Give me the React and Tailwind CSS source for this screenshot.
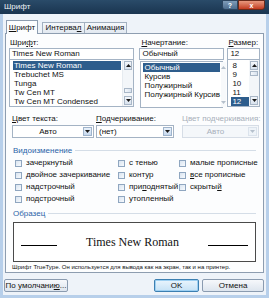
import React from 'react';

const Check = ({ children }) => (
  <div className="flex items-center h-[12px]">
    <span className="w-[7px] h-[7px] border border-[#8fa6c0] bg-gradient-to-br from-[#d9e4f0] to-[#f7fafd] shrink-0" />
    <span className="ml-[4px] whitespace-nowrap">{children}</span>
  </div>
);

const Arrow = ({ up, dim }) => (
  <svg width="5" height="3" viewBox="0 0 5 3">
    <path d={up ? 'M0 3 L2.5 0 L5 3 Z' : 'M0 0 L5 0 L2.5 3 Z'} fill={dim ? '#b5c0cc' : '#1a1a1a'} />
  </svg>
);

const ScrollBtn = ({ up }) => (
  <div className="h-[9px] flex items-center justify-center border border-[#a9b7c7] bg-gradient-to-b from-[#f4f7fb] to-[#d8e2ee]">
    <Arrow up={up} />
  </div>
);

const Drop = ({ w, children, disabled }) => (
  <div className={`h-[13px] flex items-center border ${disabled ? 'border-[#d6dde6] bg-[#f4f7fa] text-[#a8b0ba]' : 'border-[#a4b3c4] bg-white'}`} style={{ width: w }}>
    <span className="flex-1 text-center">{children}</span>
    <div className={`w-[9px] h-[9px] mr-[1px] flex items-center justify-center border ${disabled ? 'border-[#dbe3ec] bg-[#eef3f8]' : 'border-[#9fb4cc] bg-gradient-to-b from-[#eaf2fb] to-[#c7d9ee]'}`}>
      <Arrow dim={disabled} />
    </div>
  </div>
);

export default function App() {
  return (
    <div className="w-[269px] h-[298px] overflow-hidden bg-[#b7cfea] flex flex-col text-[8px] leading-none text-[#111] font-['Liberation_Sans',Arial,sans-serif]">
      {/* title bar */}
      <div className="h-[14px] flex items-start bg-gradient-to-b from-[#2a4b69] to-[#1a3550] shrink-0">
        <span className="ml-[4px] mt-[3px] text-[#f0f4f8]">Шрифт</span>
        <div className="ml-auto mr-[4px] flex">
          <div className="w-[16px] h-[10px] flex items-center justify-center bg-gradient-to-b from-[#7f9cb9] to-[#4d6d8e] border border-[#2c4560] rounded-bl-[3px] text-white text-[7px] font-bold">?</div>
          <div className="w-[27px] h-[10px] flex items-center justify-center bg-gradient-to-b from-[#e8987e] to-[#c2391d] border border-[#6a2a1a] rounded-br-[3px] text-white text-[7px] font-bold">x</div>
        </div>
      </div>

      {/* client area */}
      <div className="flex-1 mx-[3px] mb-[3px] bg-[#eef3f9] flex flex-col">
        {/* tabs */}
        <div className="flex items-end h-[19px] pl-[3px]">
          <div className="h-[14px] w-[32px] bg-[#fcfdfe] border border-b-0 border-[#8d9db0] flex items-center justify-center -mb-px relative z-10">
            <span><u>Ш</u>рифт</span>
          </div>
          <div className="h-[11px] w-[43px] ml-[4px] bg-gradient-to-b from-[#f5f8fb] to-[#e1e8f0] border border-b-0 border-[#a2b0c0] flex items-center justify-center">
            <span>Интерва<u>л</u></span>
          </div>
          <div className="h-[11px] w-[42px] bg-gradient-to-b from-[#f5f8fb] to-[#e1e8f0] border border-b-0 border-l-0 border-[#a2b0c0] flex items-center justify-center">
            <span>Анимация</span>
          </div>
        </div>

        {/* panel */}
        <div className="mx-[2px] h-[240px] border border-[#8d9db0] bg-[#fcfdfe] flex flex-col px-[3px]">
          {/* font / style / size */}
          <div className="flex mt-[5px]">
            <div className="w-[127px] flex flex-col">
              <span className="h-[9px] ml-[1px]">Шри<u>ф</u>т:</span>
              <div className="h-[12px] border border-[#a4b3c4] bg-white flex items-center pl-[2px]">Times New Roman</div>
              <div className="h-[47px] border border-t-0 border-[#a4b3c4] bg-white flex">
                <div className="flex-1 flex flex-col pt-[1px] pl-[3px] pr-[1px]">
                  <div className="h-[9px] bg-[#2e5d8c] text-white flex items-center pl-[1px]">Times New Roman</div>
                  <div className="h-[9px] flex items-center pl-[1px]">Trebuchet MS</div>
                  <div className="h-[9px] flex items-center pl-[1px]">Tunga</div>
                  <div className="h-[9px] flex items-center pl-[1px]">Tw Cen MT</div>
                  <div className="h-[9px] flex items-center pl-[1px]">Tw Cen MT Condensed</div>
                </div>
                <div className="w-[11px] flex flex-col bg-[#f3f6f9] border-l border-[#e6ebf0] py-[1px] px-[1px]">
                  <ScrollBtn up />
                  <div className="flex-1 flex flex-col justify-end pb-[3px]">
                    <div className="h-[5px] border border-[#a9b7c7] bg-gradient-to-r from-[#f4f7fb] to-[#d8e2ee]" />
                  </div>
                  <ScrollBtn />
                </div>
              </div>
            </div>

            <div className="w-[85px] ml-[5px] flex flex-col">
              <span className="h-[9px] ml-[2px]"><u>Н</u>ачертание:</span>
              <div className="h-[12px] border border-[#a4b3c4] bg-white flex items-center pl-[2px]">Обычный</div>
              <div className="h-[47px] ml-[1px] mr-[1px] border border-[#a4b3c4] bg-white flex mt-[1px]">
                <div className="flex-1 flex flex-col pt-[1px] pl-[2px] pr-[1px]">
                  <div className="h-[9px] bg-[#2e5d8c] text-white flex items-center pl-[1px]">Обычный</div>
                  <div className="h-[9px] flex items-center pl-[1px]">Курсив</div>
                  <div className="h-[9px] flex items-center pl-[1px]">Полужирный</div>
                  <div className="h-[9px] flex items-center pl-[1px] whitespace-nowrap">Полужирный Курсив</div>
                </div>
                <div className="w-[9px] flex flex-col bg-[#f7f9fb] py-[1px]">
                  <div className="h-[8px] flex items-center justify-center"><Arrow up dim /></div>
                  <div className="flex-1" />
                  <div className="h-[8px] flex items-center justify-center"><Arrow dim /></div>
                </div>
              </div>
            </div>

            <div className="w-[33px] ml-[3px] flex flex-col">
              <span className="h-[9px] ml-[1px]"><u>Р</u>азмер:</span>
              <div className="h-[12px] border border-[#a4b3c4] bg-white flex items-center pl-[2px]">12</div>
              <div className="h-[47px] border border-t-0 border-[#a4b3c4] bg-white flex">
                <div className="flex-1 flex flex-col pt-[1px] pl-[3px]">
                  <div className="h-[9px] flex items-center pl-[1px]">8</div>
                  <div className="h-[9px] flex items-center pl-[1px]">9</div>
                  <div className="h-[9px] flex items-center pl-[1px]">10</div>
                  <div className="h-[9px] flex items-center pl-[1px]">11</div>
                  <div className="h-[9px] bg-[#2e5d8c] text-white flex items-center pl-[1px]">12</div>
                </div>
                <div className="w-[10px] flex flex-col bg-[#f3f6f9] py-[1px] px-[1px]">
                  <ScrollBtn up />
                  <div className="flex-1 flex flex-col pt-[1px]">
                    <div className="h-[5px] border border-[#a9b7c7] bg-gradient-to-r from-[#f4f7fb] to-[#d8e2ee]" />
                  </div>
                  <ScrollBtn />
                </div>
              </div>
            </div>
          </div>

          {/* colour / underline */}
          <div className="flex mt-[7px] pl-[3px]">
            <div className="flex flex-col w-[82px]">
              <span className="h-[10px]"><u>Ц</u>вет текста:</span>
              <Drop w={82}>Авто</Drop>
            </div>
            <div className="flex flex-col w-[78px] ml-[2px]">
              <span className="h-[10px]"><u>П</u>одчеркивание:</span>
              <Drop w={78}>
                <span className="block text-left pl-[2px]">(нет)</span>
              </Drop>
            </div>
            <div className="flex flex-col w-[77px] ml-[8px]">
              <span className="h-[10px] text-[#a8b0ba] whitespace-nowrap">Цвет подчеркивания:</span>
              <Drop w={77} disabled>Авто</Drop>
            </div>
          </div>

          {/* effects */}
          <div className="flex items-center mt-[8px] pl-[4px] h-[9px]">
            <span className="text-[#2a62a8]">Видоизменение</span>
            <div className="flex-1 ml-[3px] mr-[4px] border-t border-[#d4dde7]" />
          </div>
          <div className="flex pl-[6px] mt-[2px]">
            <div className="w-[103px] flex flex-col">
              <Check>зачеркнутый</Check>
              <Check>двойное зачеркивание</Check>
              <Check>надстрочный</Check>
              <Check>подстрочный</Check>
            </div>
            <div className="w-[61px] flex flex-col">
              <Check>с тенью</Check>
              <Check>контур</Check>
              <Check>при<u>п</u>однятый</Check>
              <Check>утопленный</Check>
            </div>
            <div className="flex flex-col">
              <Check>малые прописные</Check>
              <Check><u>в</u>се прописные</Check>
              <Check>скрыты<u>й</u></Check>
            </div>
          </div>

          {/* sample */}
          <div className="flex items-center mt-[4px] pl-[4px] h-[9px]">
            <span className="text-[#2a62a8]">Образец</span>
            <div className="flex-1 ml-[3px] mr-[4px] border-t border-[#d4dde7]" />
          </div>
          <div className="mx-[4px] mt-[4px] h-[40px] border border-[#4a4a4a] bg-white flex items-center px-[7px]">
            <div className="w-[36px] border-t border-black mt-[6px]" />
            <span className="flex-1 text-center text-[12px] font-['Liberation_Serif','Times_New_Roman',serif]">Times New Roman</span>
            <div className="w-[40px] border-t border-black mt-[6px]" />
          </div>
          <div className="mt-[2px] pl-[3px] text-[6px] whitespace-nowrap">Шрифт TrueType. Он используется для вывода как на экран, так и на принтер.</div>
        </div>

        {/* buttons */}
        <div className="flex items-center mt-[6px] px-[1px]">
          <div className="w-[64px] h-[13px] border border-[#8a9bb0] rounded-[2px] bg-gradient-to-b from-[#f6f8fb] to-[#dde5ee] flex items-center justify-center">
            По умолчани<u>ю</u>...
          </div>
          <div className="ml-auto w-[45px] h-[13px] border border-[#3c7fb1] rounded-[2px] bg-gradient-to-b from-[#eaf5fd] to-[#c6e2f6] flex items-center justify-center shadow-[inset_0_0_0_1px_#9ed0f2]">
            OK
          </div>
          <div className="ml-[3px] mr-[1px] w-[62px] h-[13px] border border-[#8a9bb0] rounded-[2px] bg-gradient-to-b from-[#f6f8fb] to-[#dde5ee] flex items-center justify-center">
            Отмена
          </div>
        </div>
      </div>
    </div>
  );
}
